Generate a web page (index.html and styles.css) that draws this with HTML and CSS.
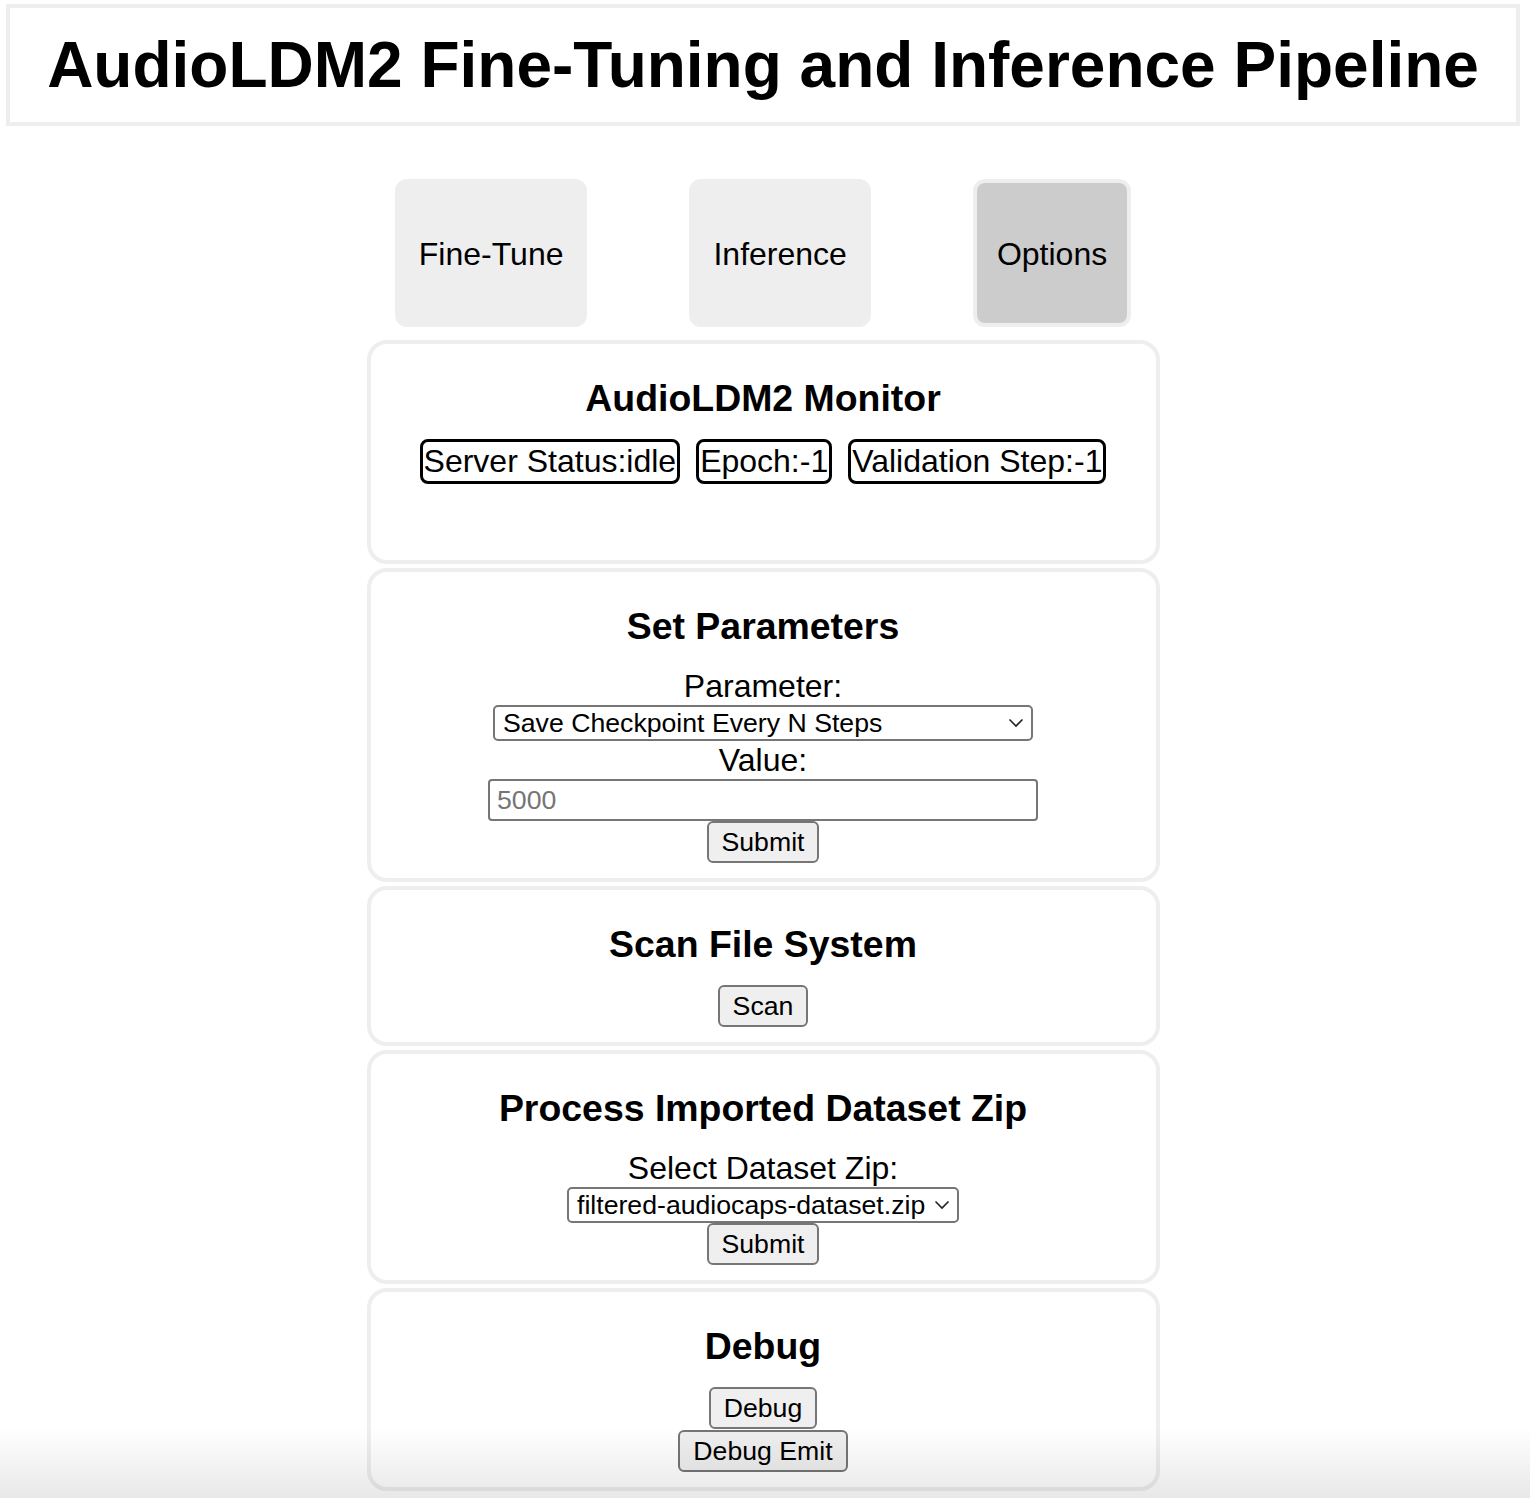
FILE: index.html
```html
<!DOCTYPE html>
<html lang="en">
<head>
<meta charset="utf-8">
<title>AudioLDM2 Fine-Tuning and Inference Pipeline</title>
<link rel="stylesheet" href="styles.css">
</head>
<body>
<div class="page">
  <header class="header">
    <h1 class="title">AudioLDM2 Fine-Tuning and Inference Pipeline</h1>
  </header>

  <nav class="tabs">
    <button class="tab">Fine-Tune</button>
    <button class="tab">Inference</button>
    <button class="tab tab-active">Options</button>
  </nav>

  <main class="cards">
    <section class="card card-monitor">
      <h3 class="card-title">AudioLDM2 Monitor</h3>
      <div class="badges">
        <span class="badge">Server Status:idle</span>
        <span class="badge">Epoch:-1</span>
        <span class="badge">Validation Step:-1</span>
      </div>
    </section>

    <section class="card">
      <h3 class="card-title">Set Parameters</h3>
      <form class="form">
        <label class="label" for="param">Parameter:</label>
        <span class="select-wrap select-param">
          <select id="param" class="select">
            <option>Save Checkpoint Every N Steps</option>
          </select>
          <svg class="chevron" width="16" height="10" viewBox="0 0 16 10"><path d="M1.5 1.5 L8 8 L14.5 1.5" fill="none" stroke="#222" stroke-width="1.6"/></svg>
        </span>
        <label class="label" for="value">Value:</label>
        <input id="value" class="input" type="text" placeholder="5000">
        <button type="button" class="btn">Submit</button>
      </form>
    </section>

    <section class="card">
      <h3 class="card-title">Scan File System</h3>
      <div class="form">
        <button type="button" class="btn">Scan</button>
      </div>
    </section>

    <section class="card">
      <h3 class="card-title">Process Imported Dataset Zip</h3>
      <form class="form">
        <label class="label" for="zip">Select Dataset Zip:</label>
        <span class="select-wrap select-zip">
          <select id="zip" class="select">
            <option>filtered-audiocaps-dataset.zip</option>
          </select>
          <svg class="chevron" width="16" height="10" viewBox="0 0 16 10"><path d="M1.5 1.5 L8 8 L14.5 1.5" fill="none" stroke="#222" stroke-width="1.6"/></svg>
        </span>
        <button type="button" class="btn">Submit</button>
      </form>
    </section>

    <section class="card">
      <h3 class="card-title">Debug</h3>
      <div class="form form-debug">
        <button type="button" class="btn">Debug</button>
        <button type="button" class="btn">Debug Emit</button>
      </div>
    </section>
  </main>
</div>
<div class="bottom-fade"></div>
</body>
</html>
```

FILE: styles.css
```css
* {
  box-sizing: border-box;
}

html, body {
  margin: 0;
  padding: 0;
  background: #ffffff;
}

body {
  font-family: "Liberation Sans", Arial, Helvetica, sans-serif;
  color: #000;
  overflow: hidden;
}

.page {
  width: 1526px;
  display: flex;
  flex-direction: column;
  align-items: center;
}

.header {
  align-self: stretch;
  margin: 4px 6px 0;
  border: 4px solid #eeeeee;
  text-align: center;
}

.title {
  font-size: 64px;
  font-weight: bold;
  line-height: 73px;
  margin: 21px 0 20px;
}

.tabs {
  display: flex;
  gap: 102px;
  margin-top: 53px;
}

.tab {
  height: 148px;
  padding: 2px 20px 0;
  border: 4px solid #eeeeee;
  border-radius: 12px;
  background: #eeeeee;
  font-family: "Liberation Sans", Arial, sans-serif;
  font-size: 32px;
  color: #000;
  display: flex;
  align-items: center;
  justify-content: center;
}

.tab-active {
  background: #cccccc;
}

.cards {
  width: 793px;
  margin-top: 13px;
  display: flex;
  flex-direction: column;
  gap: 4px;
}

.card {
  border: 4px solid #eeeeee;
  border-radius: 20px;
  text-align: center;
  padding-bottom: 15px;
}

.card-monitor {
  padding-bottom: 76px;
}

.card-title {
  font-size: 37.44px;
  font-weight: bold;
  line-height: 43px;
  margin: 32.5px 0 19.5px;
}

.badges {
  display: flex;
  justify-content: center;
  gap: 16px;
}

.badge {
  border: 3px solid #000;
  border-radius: 8px;
  padding: 1px 1px;
  font-size: 32px;
  line-height: 37px;
}

.form {
  display: flex;
  flex-direction: column;
  align-items: center;
}

.form-debug {
  gap: 1px;
}

.label {
  font-size: 32px;
  line-height: 38px;
}

.select-wrap {
  position: relative;
  display: block;
}

.select-param {
  width: 540px;
}

.select-zip {
  width: 392px;
}

.select {
  -webkit-appearance: none;
  appearance: none;
  width: 100%;
  height: 36px;
  border: 2px solid #767676;
  border-radius: 5px;
  background: #ffffff;
  font-family: "Liberation Sans", Arial, sans-serif;
  font-size: 26.67px;
  color: #000;
  padding: 0 22px 0 8px;
  line-height: 32px;
}

.chevron {
  position: absolute;
  right: 9px;
  top: 13px;
  pointer-events: none;
}

.input {
  width: 550px;
  height: 42px;
  border: 2px solid #767676;
  border-radius: 4px;
  padding: 0 7px;
  font-family: "Liberation Sans", Arial, sans-serif;
  font-size: 26.67px;
  color: #000;
  background: #fff;
}

.input::placeholder {
  color: #757575;
}

.btn {
  height: 42px;
  padding: 0 13px;
  border: 2px solid #767676;
  border-radius: 6px;
  background: #efefef;
  font-family: "Liberation Sans", Arial, sans-serif;
  font-size: 26.67px;
  line-height: 30px;
  color: #000;
}

.bottom-fade {
  position: fixed;
  left: 0;
  right: 0;
  bottom: 0;
  height: 70px;
  background: linear-gradient(to bottom, rgba(0, 0, 0, 0), rgba(0, 0, 0, 0.09));
  pointer-events: none;
}
```
